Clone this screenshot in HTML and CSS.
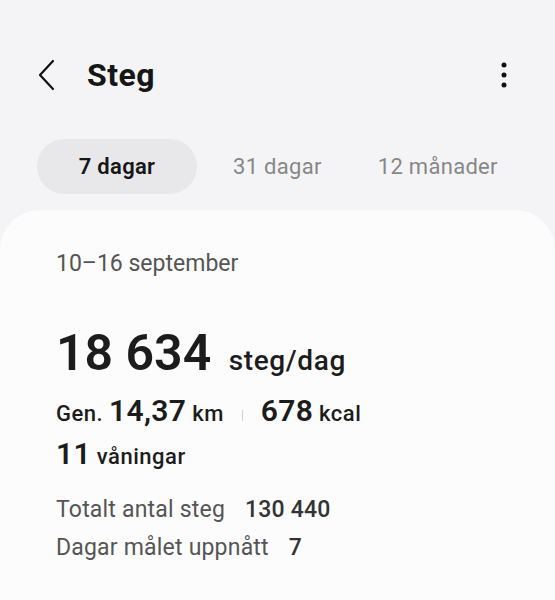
FILE: index.html
```html
<!doctype html>
<html>
<head>
<meta charset="utf-8">
<title>Steg</title>
<link rel="stylesheet" href="styles.css">
</head>
<body>
<div class="topbar">
  <svg class="back" width="18" height="32" viewBox="0 0 18 32"><path d="M15 2 L2 16 L15 30" fill="none" stroke="#111" stroke-width="2.2" stroke-linecap="round" stroke-linejoin="round"/></svg>
  <h1>Steg</h1>
  <svg class="more" width="8" height="26" viewBox="0 0 8 26"><circle cx="4" cy="3" r="2.5" fill="#111"/><circle cx="4" cy="13" r="2.5" fill="#111"/><circle cx="4" cy="23" r="2.5" fill="#111"/></svg>
</div>
<div class="tabs">
  <span class="tab active">7 dagar</span>
  <span class="tab">31 dagar</span>
  <span class="tab">12 månader</span>
</div>
<div class="card">
  <div class="range">10–16 september</div>
  <div class="total"><b>18 634</b> <span>steg/dag</span></div>
  <div class="stats">Gen. <b>14,37</b> km <i class="sep"></i> <b>678</b> kcal</div>
  <div class="stats"><b>11</b> våningar</div>
  <div class="line first">Totalt antal steg <em>130 440</em></div>
  <div class="line">Dagar målet uppnått <em>7</em></div>
</div>
</body>
</html>
```
FILE: styles.css
```css
html, body {
	margin: 0;
	padding: 0;
	background: #f4f4f6;
	font-family: Roboto, "Noto Sans", sans-serif;
	color: #161616;
}
.topbar {
	display: flex;
	align-items: center;
	height: 60px;
	margin-top: 45px;
	padding: 0 47px 0 38px;
}
.back {
	margin-right: 31px;
}
h1 {
	margin: 0;
	font-size: 32px;
	font-weight: 700;
	letter-spacing: 0.5px;
	flex: 1;
}
.tabs {
	display: flex;
	align-items: center;
	margin: 34px 0 0 37px;
	height: 55px;
}
.tab {
	font-size: 22px;
	letter-spacing: 0.3px;
	color: #878787;
	margin-right: 56px;
}
.tab.active {
	background: #e8e8ea;
	color: #161616;
	font-weight: 600;
	width: 160px;
	height: 55px;
	line-height: 55px;
	text-align: center;
	border-radius: 28px;
	margin-right: 36px;
}
.card {
	margin-top: 16px;
	background: #fcfcfd;
	border-radius: 40px 40px 0 0;
	padding: 39px 56px 40px;
	min-height: 351px;
}
.range {
	font-size: 23px;
	line-height: 30px;
	color: #555;
}
.total {
	margin-top: 46px;
	font-size: 28px;
	line-height: 56px;
	font-weight: 500;
	letter-spacing: 0.6px;
	color: #1c1c1c;
}
.total b {
	font-size: 50px;
	font-weight: 600;
	letter-spacing: 0;
	margin-right: 10px;
}
.stats {
	font-size: 22px;
	line-height: 36px;
	font-weight: 500;
	letter-spacing: 0.5px;
	color: #1c1c1c;
	margin-top: 4px;
}
.stats b {
	font-size: 30px;
	font-weight: 600;
	letter-spacing: 0.3px;
}
.sep {
	display: inline-block;
	width: 1px;
	height: 11px;
	background: #d0d0d0;
	margin: 0 12px;
}
.line {
	font-size: 23px;
	line-height: 38px;
	letter-spacing: 0.2px;
	color: #555;
}
.line.first {
	margin-top: 16px;
}
.line em {
	font-style: normal;
	font-weight: 500;
	color: #333;
	margin-left: 14px;
}
```
